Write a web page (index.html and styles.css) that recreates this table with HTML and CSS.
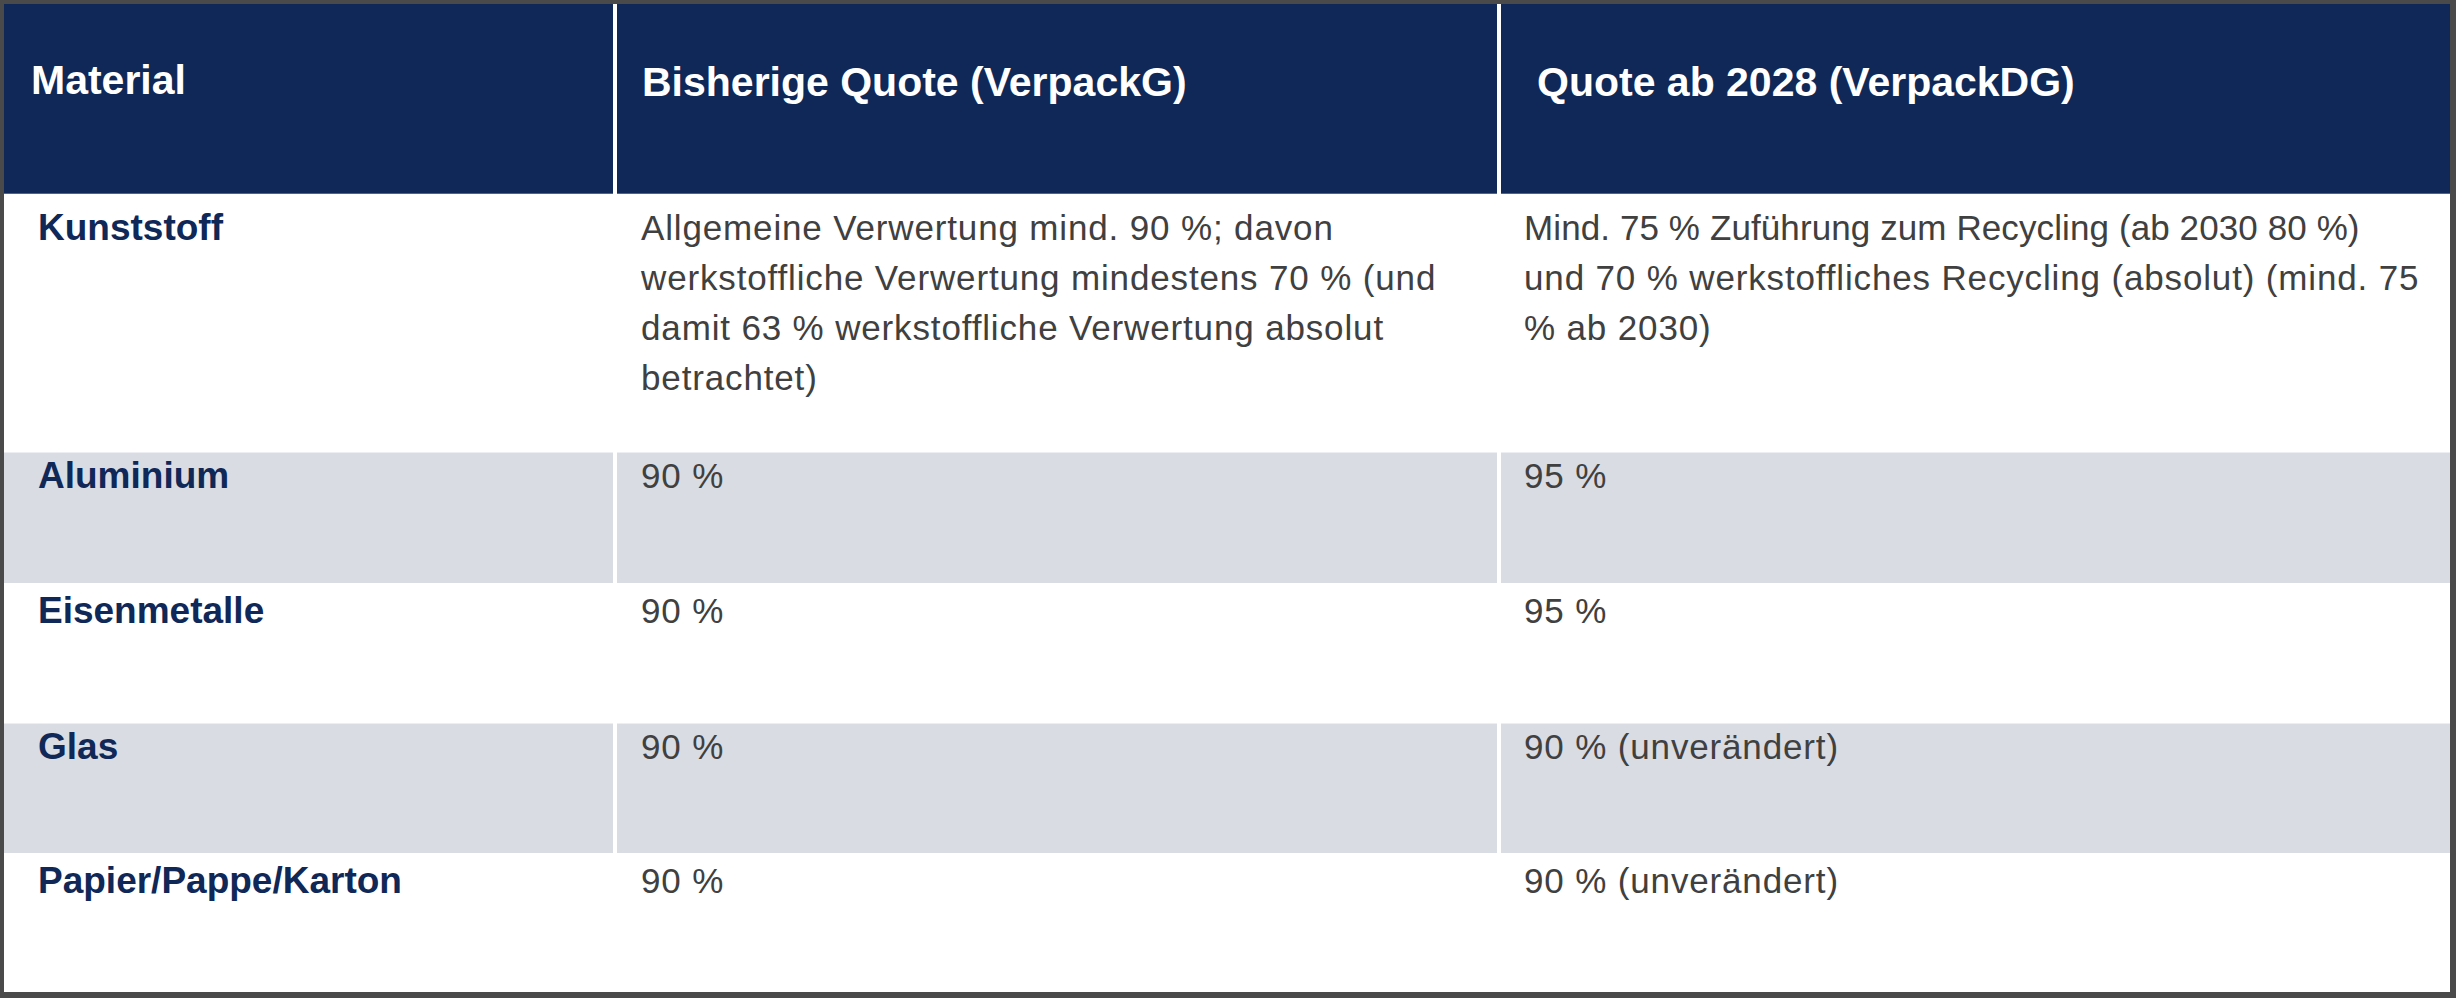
FILE: index.html
```html
<!DOCTYPE html>
<html lang="de">
<head>
<meta charset="utf-8">
<title>Recyclingquoten VerpackG / VerpackDG</title>
<link rel="stylesheet" href="styles.css">
</head>
<body>
<div class="frame">
  <div class="row head">
    <div class="cell h1">Material</div>
    <div class="cell h2">Bisherige Quote (VerpackG)</div>
    <div class="cell h3">Quote ab 2028 (VerpackDG)</div>
  </div>
  <div class="row r1">
    <div class="cell name">Kunststoff</div>
    <div class="cell txt">Allgemeine Verwertung mind. 90 %; davon werkstoffliche Verwertung mindestens 70 % (und damit 63 % werkstoffliche Verwertung absolut betrachtet)</div>
    <div class="cell txt t3"><span class="tight">Mind. 75 % Zuführung zum Recycling (ab 2030 80 %)</span> und 70 % werkstoffliches Recycling (absolut) (mind. 75 % ab 2030)</div>
  </div>
  <div class="row r2 alt">
    <div class="cell name">Aluminium</div>
    <div class="cell txt">90 %</div>
    <div class="cell txt t3">95 %</div>
  </div>
  <div class="row r3">
    <div class="cell name">Eisenmetalle</div>
    <div class="cell txt">90 %</div>
    <div class="cell txt t3">95 %</div>
  </div>
  <div class="row r4 alt">
    <div class="cell name">Glas</div>
    <div class="cell txt">90 %</div>
    <div class="cell txt t3">90 % (unverändert)</div>
  </div>
  <div class="row r5">
    <div class="cell name">Papier/Pappe/Karton</div>
    <div class="cell txt">90 %</div>
    <div class="cell txt t3">90 % (unverändert)</div>
  </div>
</div>
</body>
</html>
```

FILE: styles.css
```css
html, body {
  margin: 0;
  padding: 0;
  background: #ffffff;
}

body {
  font-family: "Liberation Sans", Arial, Helvetica, sans-serif;
}

.frame {
  width: 2456px;
  height: 998px;
  box-sizing: border-box;
  border-style: solid;
  border-color: #4a4a4a;
  border-width: 4px 6px 6px 4px;
  background: #ffffff;
  display: flex;
  flex-direction: column;
}

.row {
  display: grid;
  grid-template-columns: 609px 880px 949px;
  column-gap: 4px;
  flex: none;
}

.cell {
  box-sizing: border-box;
}

/* header */
.head { height: 190px; }
.head .cell {
  background: #0f2857;
  color: #ffffff;
  font-weight: bold;
  font-size: 41px;
  line-height: 47px;
  border-bottom: 1px solid #4a6592;
  padding-top: 55px;
}
.head .h1 { padding-left: 27px; padding-top: 53px; }
.head .h2 { padding-left: 25px; }
.head .h3 { padding-left: 36px; }

/* body rows */
.r1 { height: 258px; }
.r2 { height: 131px; }
.r3 { height: 140px; }
.r4 { height: 130px; }
.r5 { height: 139px; }

.alt .cell {
  background: #d9dce3;
  border-top: 1px solid #eceef2;
}

.name {
  color: #0f2857;
  font-weight: bold;
  font-size: 37px;
  padding-left: 34px;
}

.txt {
  color: #404040;
  font-size: 35px;
  letter-spacing: 0.85px;
  padding-left: 24px;
  padding-right: 16px;
}

.t3 {
  padding-left: 23px;
  padding-right: 26px;
}

.tight { letter-spacing: 0.1px; }

.r1 .cell { line-height: 50px; padding-top: 9px; }
.r2 .cell, .r3 .cell, .r4 .cell, .r5 .cell { line-height: 46px; }
.r2 .cell { padding-top: 0; }
.r3 .cell { padding-top: 5px; }
.r4 .cell { padding-top: 0; }
.r5 .cell { padding-top: 5px; }
```
